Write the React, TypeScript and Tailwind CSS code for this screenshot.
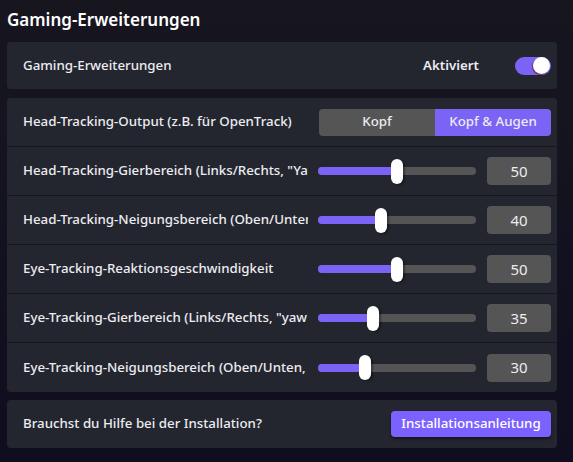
import React from 'react';

const sliders = [
  { label: 'Head-Tracking-Gierbereich (Links/Rechts, "Yaw")', value: 50 },
  { label: 'Head-Tracking-Neigungsbereich (Oben/Unten, "Pitch")', value: 40 },
  { label: 'Eye-Tracking-Reaktionsgeschwindigkeit', value: 50 },
  { label: 'Eye-Tracking-Gierbereich (Links/Rechts, "yaw")', value: 35 },
  { label: 'Eye-Tracking-Neigungsbereich (Oben/Unten, "pitch")', value: 30 },
];

function Slider({ value }: { value: number }) {
  return (
    <div className="relative w-[158px] h-[25px] flex items-center">
      <div className="w-full h-[8px] rounded-full bg-[#555555] overflow-hidden">
        <div className="h-full bg-[#7b63f6]" style={{ width: `${value}%` }} />
      </div>
      <div
        className="absolute top-0 w-[12px] h-[25px] -ml-[6px] rounded-full bg-white shadow-[2px_1px_2px_rgba(0,0,0,0.35)]"
        style={{ left: `${value}%` }}
      />
    </div>
  );
}

export default function App() {
  return (
    <div
      className="w-[573px] h-[462px] overflow-hidden bg-gradient-to-b from-[#17161f] to-[#0f0d1f] text-[#ececf1]"
      style={{ fontFamily: '"Noto Sans", "Open Sans", sans-serif' }}
    >
      <div className="w-[557px] pl-[7px] pt-[5px]">
        <h1 className="text-[17px] font-semibold leading-[30px] text-white mb-[7px]">Gaming-Erweiterungen</h1>

        <div className="h-[47px] rounded-[4px] bg-[#24262f] flex items-center pl-[16px] pr-[6px]">
          <span className="flex-1 text-[13.3px] font-medium">Gaming-Erweiterungen</span>
          <span className="text-[13.3px] font-semibold mr-[36px]">Aktiviert</span>
          <div className="relative w-[36px] h-[18px] rounded-full bg-[#7b63f6]">
            <div className="absolute right-[1px] top-[1px] w-[17px] h-[17px] -mt-[0.5px] rounded-full bg-white shadow-[-1px_1px_1px_rgba(120,20,30,0.7)]" />
          </div>
        </div>

        <div className="mt-[9px] rounded-[4px] bg-[#24262f] divide-y divide-[#17171f]">
          <div className="h-[49px] flex items-center pl-[16px] pr-[6px]">
            <span className="flex-1 text-[13.3px] font-medium whitespace-nowrap overflow-hidden">Head-Tracking-Output (z.B. für OpenTrack)</span>
            <div className="flex w-[232px] h-[27px] rounded-[4px] overflow-hidden text-[13.3px] font-medium">
              <div className="flex-1 bg-[#555555] flex items-center justify-center">Kopf</div>
              <div className="flex-1 bg-[#7b63f6] flex items-center justify-center">Kopf &amp; Augen</div>
            </div>
          </div>
          {sliders.map((s) => (
            <div key={s.label} className="h-[49px] flex items-center pl-[16px] pr-[6px]">
              <span className="w-[285px] mr-[10px] text-[13.3px] font-medium whitespace-nowrap overflow-hidden">{s.label}</span>
              <Slider value={s.value} />
              <div className="ml-[11px] w-[64px] h-[28px] rounded-[4px] bg-[#555555] flex items-center justify-center text-[15px]">
                {s.value}
              </div>
            </div>
          ))}
        </div>

        <div className="mt-[8px] h-[48px] rounded-[4px] bg-[#24262f] flex items-center pl-[16px] pr-[6px]">
          <span className="flex-1 text-[13.3px] font-medium">Brauchst du Hilfe bei der Installation?</span>
          <button className="w-[160px] h-[26px] rounded-[4px] bg-[#7b61ff] text-[13.3px] font-medium text-white shadow-[0_2px_3px_rgba(0,0,0,0.45)]">
            Installationsanleitung
          </button>
        </div>
      </div>
    </div>
  );
}
